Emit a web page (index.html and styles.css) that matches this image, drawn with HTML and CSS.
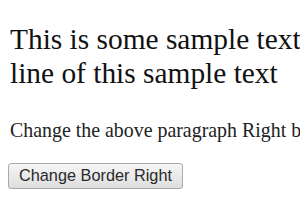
FILE: index.html
```html
<!DOCTYPE html>
<html lang="en">
<head>
    <meta charset="UTF-8">
    <title>Border Right</title>
    <link rel="stylesheet" href="styles.css">
</head>
<body>

    <div class="page">
        <p class="sample" id="sample">This is some sample text. This is the first<br>line of this sample text</p>

        <p class="note">Change the above paragraph Right border color.</p>

        <button class="change-btn" onclick="changeBorder()">Change Border Right</button>
    </div>

    <script>
        function changeBorder() {
            document.getElementById("sample").style.borderRight = "thick solid #0000FF";
        }
    </script>

</body>
</html>
```

FILE: styles.css
```css
* {
    box-sizing: border-box;
}

html, body {
    margin: 0;
    padding: 0;
    overflow: hidden;
}

body {
    background-color: white;
    color: #111;
    font-family: "Liberation Serif", "Times New Roman", serif;
}

.page {
    width: 300px;
    height: 210px;
    padding: 0 10px;
    overflow: hidden;
}

.sample {
    margin: 22px 0 0;
    font-size: 29.4px;
    line-height: 34px;
    white-space: nowrap;
}

.note {
    margin: 29px 0 0;
    font-size: 19.9px;
    line-height: 22px;
    white-space: nowrap;
    color: #222;
}

.change-btn {
    display: block;
    margin: 21.5px 0 0 -2px;
    width: 175px;
    height: 26px;
    padding: 0 9px 0 10px;
    font-family: "Liberation Sans", Arial, sans-serif;
    font-size: 16.3px;
    color: #2a2a2a;
    text-align: left;
    white-space: nowrap;
    background: linear-gradient(#f6f6f6, #dedede);
    border: 1px solid #a9a9a9;
    border-radius: 3px;
}
```
